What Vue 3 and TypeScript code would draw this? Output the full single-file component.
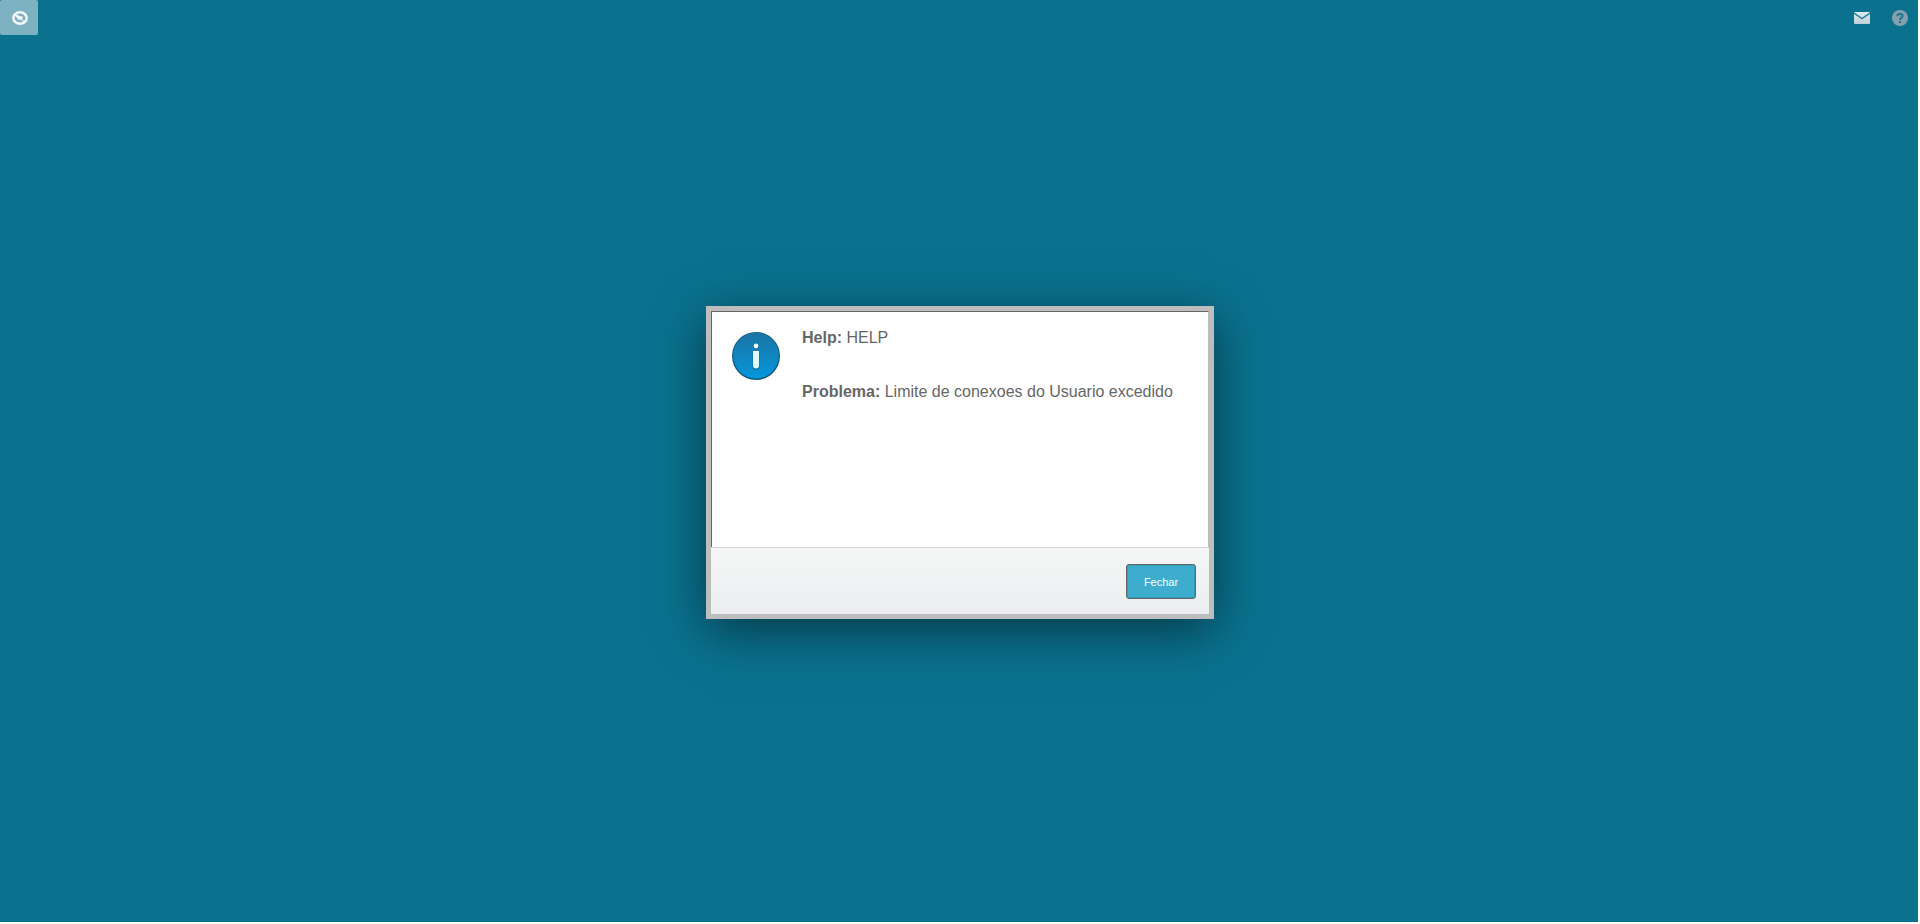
<script setup lang="ts">
import { ref } from 'vue'

interface Detail {
  label: string
  text: string
}

const open = ref(true)
const details: Detail[] = [
  { label: 'Help:', text: 'HELP' },
  { label: 'Problema:', text: 'Limite de conexoes do Usuario excedido' },
]
</script>

<template>
  <div class="desktop">
    <header class="topbar">
      <button class="start" type="button" aria-label="Menu">
        <svg width="16" height="14" viewBox="0 0 16 14" aria-hidden="true">
          <ellipse cx="8" cy="7" rx="6.7" ry="5.7" fill="none" stroke="#f4f8f9" stroke-width="2.5" />
          <path d="M2.5 4.2 5.5 3.8 7 5 10.6 5.4 10.4 9 6 8.6 4.6 6.2z" fill="#f4f8f9" />
          <path d="M10.4 9 13.5 9.8 10.5 11z" fill="#f4f8f9" />
        </svg>
      </button>
      <nav class="tools">
        <button class="tool" type="button" aria-label="Mensagens">
          <svg width="16" height="12" viewBox="0 0 16 12" aria-hidden="true">
            <defs>
              <linearGradient id="mail-fill" x1="0" y1="0" x2="0" y2="1">
                <stop offset="0" stop-color="#dde9ed" />
                <stop offset="1" stop-color="#bdd0d9" />
              </linearGradient>
            </defs>
            <rect width="16" height="12" rx="1" fill="url(#mail-fill)" />
            <path d="M0 1 8 6.6 16 1" fill="none" stroke="#2a8099" stroke-width="1.5" />
          </svg>
        </button>
        <button class="tool" type="button" aria-label="Ajuda">
          <svg width="16" height="16" viewBox="0 0 16 16" aria-hidden="true">
            <circle cx="8" cy="8" r="8" fill="#84a0ad" />
            <path d="M5.4 6.2C5.4 3.2 10.6 3.2 10.6 6 10.6 7.8 8 7.7 8 10" fill="none" stroke="#1b738d" stroke-width="2" />
            <rect x="7" y="11" width="2" height="2" fill="#1b738d" />
          </svg>
        </button>
      </nav>
    </header>

    <main class="stage">
      <section v-if="open" class="dialog" role="dialog" aria-label="Help">
        <div class="content">
          <svg class="info" width="48" height="48" viewBox="0 0 48 48" aria-hidden="true">
            <defs>
              <linearGradient id="info-fill" x1="0" y1="0" x2="0" y2="1">
                <stop offset="0" stop-color="#1b74a3" />
                <stop offset="1" stop-color="#0497dc" />
              </linearGradient>
            </defs>
            <circle cx="24" cy="24" r="24" fill="#12587b" />
            <circle cx="24" cy="23.5" r="22.9" fill="url(#info-fill)" />
            <path d="M20.5 19h7v15.5a3.5 3.5 0 0 1-7 0z" fill="#126a9a" />
            <circle cx="24" cy="14.5" r="2.8" fill="#126a9a" />
            <circle cx="24" cy="14" r="2.4" fill="#effdff" />
            <path d="M21 19h6v14.5a3 3 0 0 1-6 0z" fill="#dcfaff" />
          </svg>
          <div class="details">
            <p v-for="item in details" :key="item.label">
              <strong>{{ item.label }}</strong> {{ item.text }}
            </p>
          </div>
        </div>
        <footer class="actions">
          <button class="close" type="button" @click="open = false">Fechar</button>
        </footer>
      </section>
    </main>
  </div>
</template>

<style>
body {
  margin: 0;
  background: #fff;
}
</style>

<style scoped>
.desktop {
  min-height: 100vh;
  display: grid;
  background: #0a728f;
  box-shadow: inset -2px -2px 0 #fff;
  font-family: Arial, "Liberation Sans", sans-serif;
  color: #666;
}

.topbar,
.stage {
  grid-area: 1 / 1;
}

.topbar {
  align-self: start;
  display: flex;
  justify-content: space-between;
  padding-right: 1px;
}

.start,
.tool {
  display: flex;
  align-items: center;
  justify-content: center;
  width: 38px;
  height: 36px;
  padding: 0;
  border: 0;
  background: transparent;
}

.start {
  height: 35px;
  padding: 1px 0 0 2px;
  border-radius: 2px;
  background: #7eb1c2;
}

.tools {
  display: flex;
}

.stage {
  display: grid;
  place-items: center;
  padding-top: 1px;
}

.dialog {
  display: flex;
  flex-direction: column;
  width: 498px;
  border: 5px solid #bdbdbd;
  box-shadow: 0 12px 48px rgba(0, 0, 0, 0.5);
}

.content {
  display: flex;
  gap: 22px;
  box-sizing: border-box;
  min-height: 236px;
  padding: 17px 20px;
  border: solid;
  border-width: 1px 1px 0 1px;
  border-color: #666 #bdbdbd #666 #666;
  background: #fff;
}

.info {
  flex: none;
  margin-top: 3px;
}

.details p {
  margin: 0 0 36px;
  font-size: 16px;
  line-height: 18px;
}

.actions {
  display: flex;
  justify-content: flex-end;
  padding: 16px 13px 15px;
  border-top: 1px solid #d5d8da;
  background: linear-gradient(#f5f7f6, #ecedf0);
}

.close {
  width: 70px;
  height: 35px;
  padding: 0;
  border: 1px solid #666;
  border-radius: 3px;
  background: #3eaccc;
  box-shadow: inset 0 0 0 1px #329cbb;
  color: #fff;
  font: 11px Arial, "Liberation Sans", sans-serif;
}
</style>
